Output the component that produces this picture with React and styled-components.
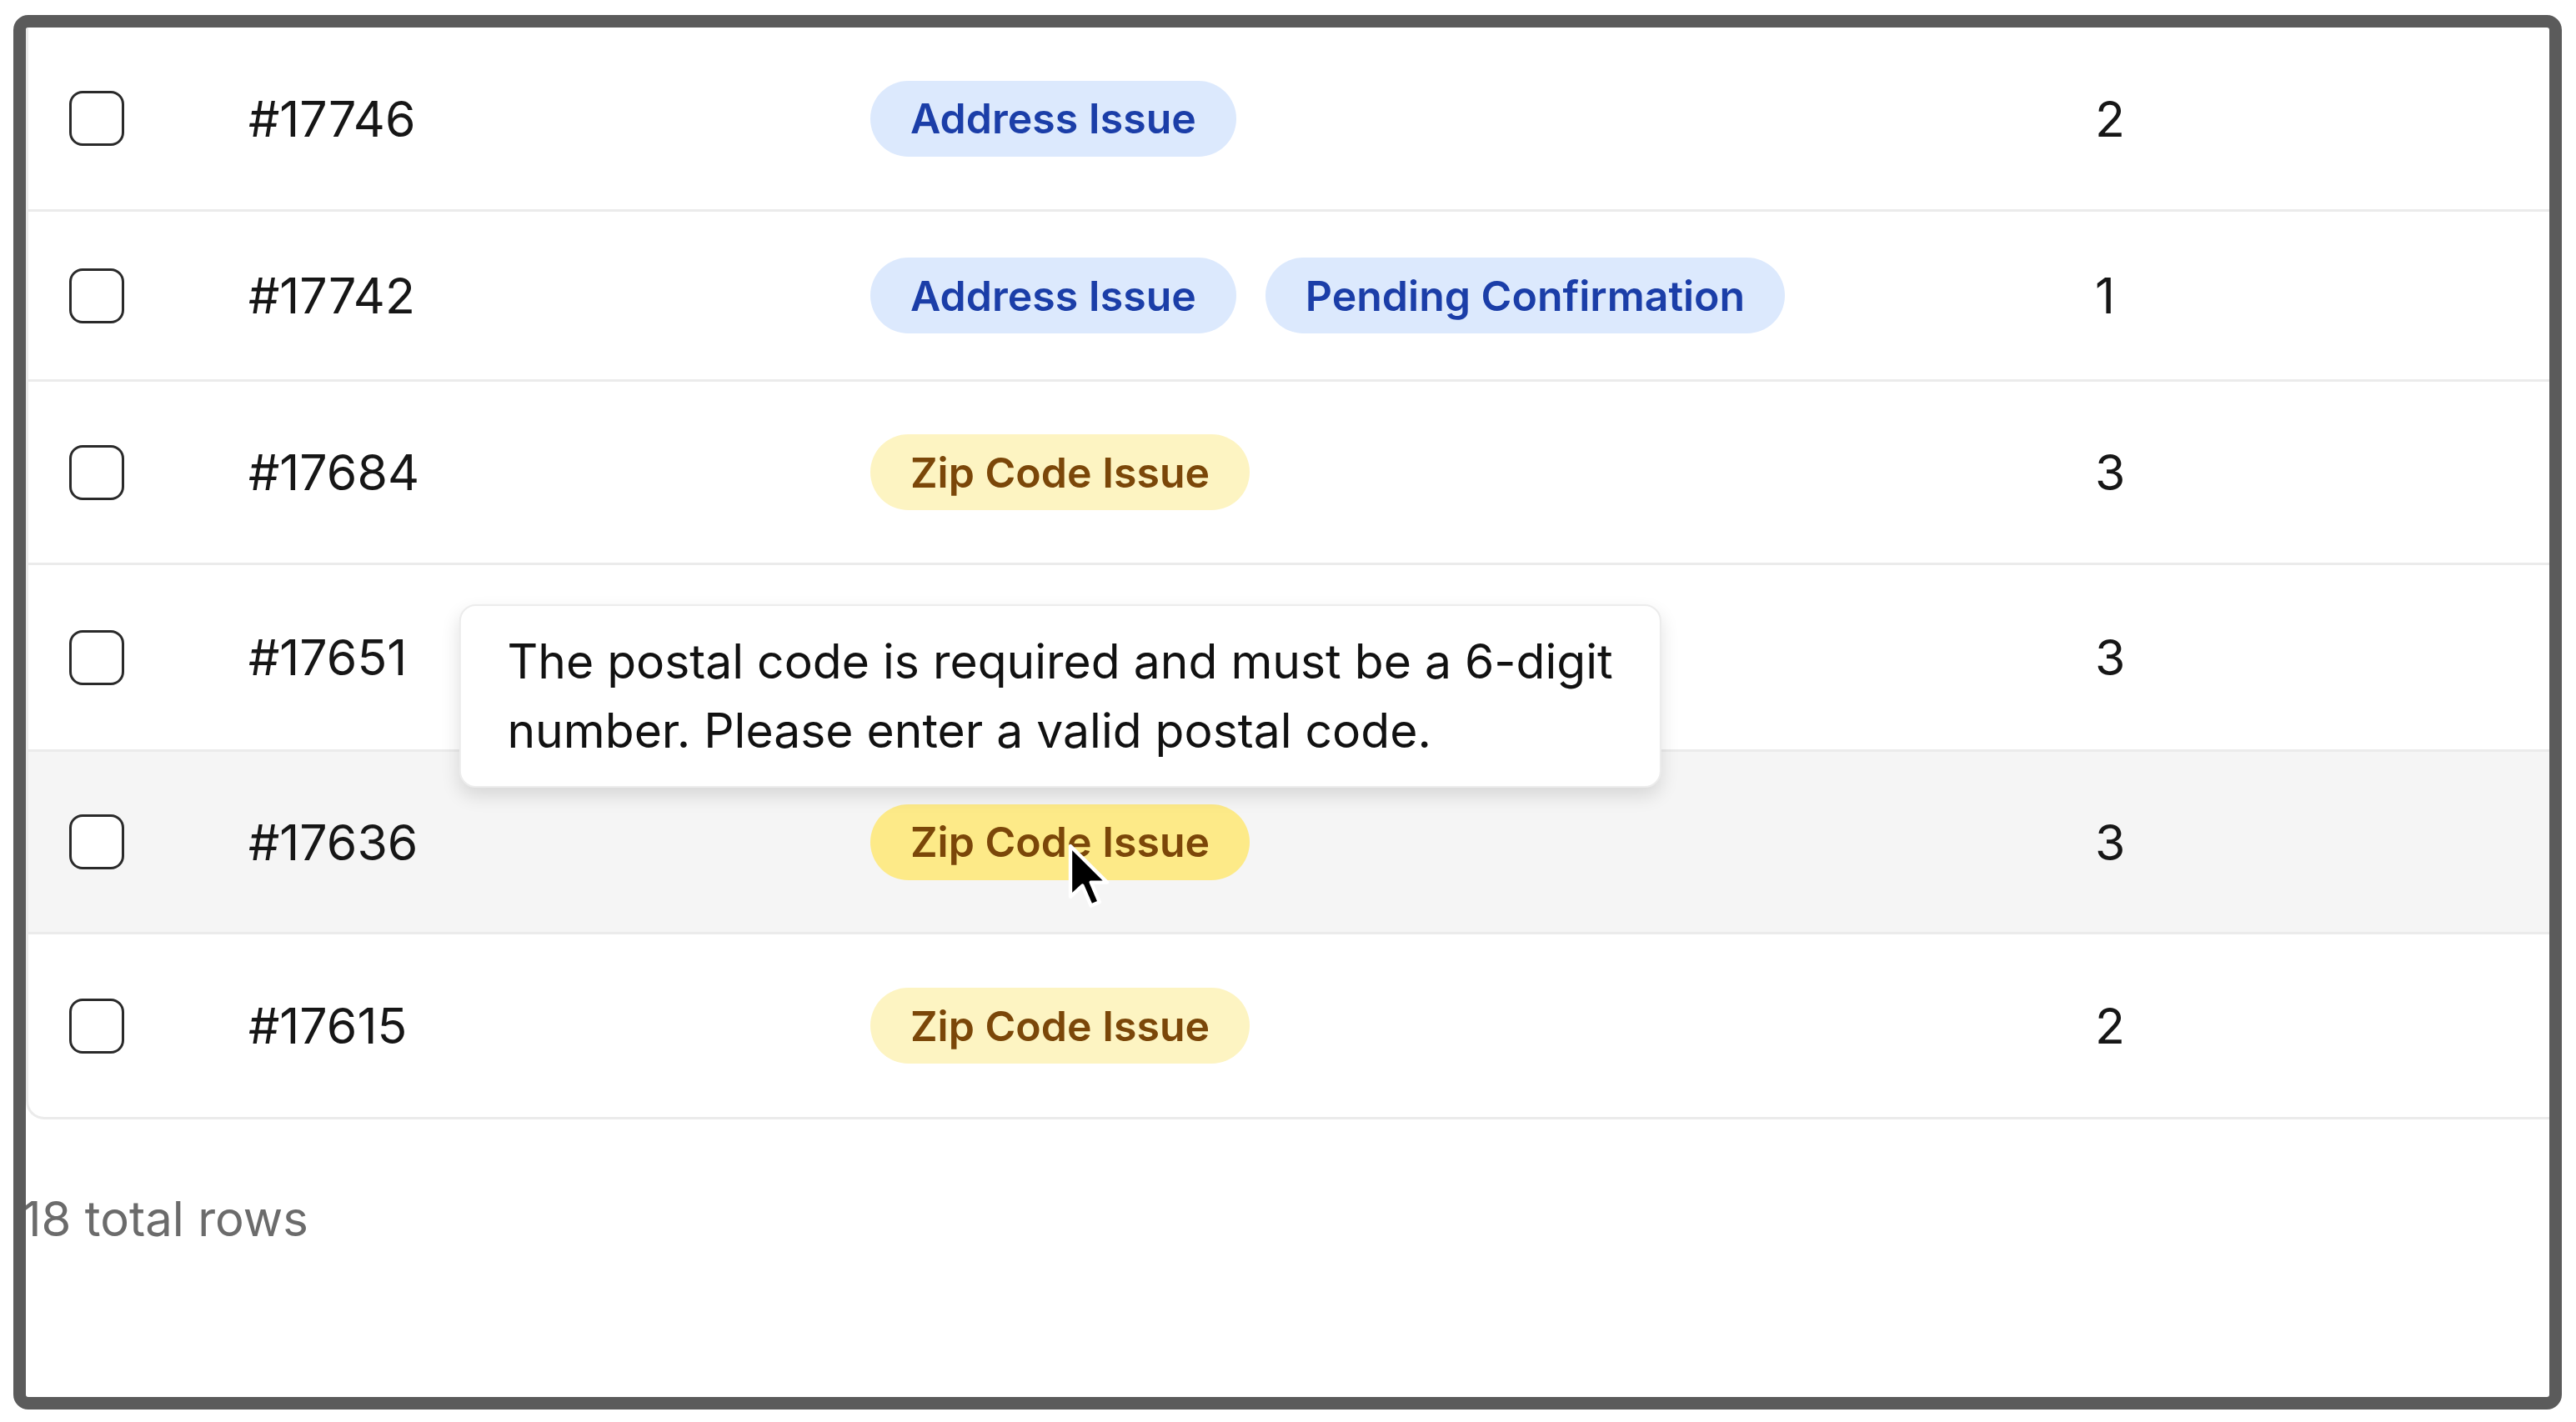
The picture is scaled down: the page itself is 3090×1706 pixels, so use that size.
import React from "react";
import styled, { createGlobalStyle } from "styled-components";

const GlobalStyle = createGlobalStyle`
  html, body {
    margin: 0;
    background: #ffffff;
  }
  body {
    padding: 18px 17px 15px 16px;
    font-family: Inter, "Noto Sans", "Liberation Sans", sans-serif;
    color: #161616;
  }
`;

const rows = [
  { id: "#17746", tags: [{ label: "Address Issue", tone: "blue" }], count: 2, h: 221 },
  {
    id: "#17742",
    tags: [
      { label: "Address Issue", tone: "blue" },
      { label: "Pending Confirmation", tone: "blue" },
    ],
    count: 1,
    h: 204,
  },
  { id: "#17684", tags: [{ label: "Zip Code Issue", tone: "yellow" }], count: 3, h: 220 },
  { id: "#17651", tags: [], count: 3, h: 224 },
  {
    id: "#17636",
    tags: [{ label: "Zip Code Issue", tone: "yellow", hover: true }],
    count: 3,
    h: 219,
    hover: true,
  },
  { id: "#17615", tags: [{ label: "Zip Code Issue", tone: "yellow" }], count: 2, h: 219 },
];

const tones = {
  blue: { bg: "#dce9fd", fg: "#1b3ea8", hover: "#c9dcfb" },
  yellow: { bg: "#fdf4c2", fg: "#7b4709", hover: "#fdea88" },
};

export default function App() {
  return (
    <>
      <GlobalStyle />
      <Frame>
        <Table>
          {rows.map((row, i) => (
            <Row key={row.id} $h={row.h} $hover={row.hover} $last={i === rows.length - 1}>
              <CheckCell>
                <Checkbox />
              </CheckCell>
              <IdCell>{row.id}</IdCell>
              <TagCell>
                {row.tags.map((tag) => (
                  <Badge key={tag.label} $tone={tag.tone} $hover={tag.hover}>
                    {tag.label}
                    {tag.hover && (
                      <>
                        <Tooltip>
                          The postal code is required and must be a 6-digit
                          <br />
                          number. Please enter a valid postal code.
                        </Tooltip>
                        <Cursor viewBox="0 0 13 20">
                          <path
                            d="M1 1 L1 16.2 L4.6 12.9 L7.2 18.9 L9.7 17.8 L7.2 11.9 L12 11.9 Z"
                            fill="#000"
                            stroke="#fff"
                            strokeWidth="1.1"
                            strokeLinejoin="round"
                          />
                        </Cursor>
                      </>
                    )}
                  </Badge>
                ))}
              </TagCell>
              <CountCell>{row.count}</CountCell>
            </Row>
          ))}
        </Table>
        <Footer>18 total rows</Footer>
      </Frame>
    </>
  );
}

const Frame = styled.div`
  position: relative;
  box-sizing: border-box;
  height: 1673px;
  border: 15px solid #5b5b5b;
  border-radius: 18px;
  background: #ffffff;
  overflow: hidden;
`;

const Table = styled.div`
  border-left: 3px solid #ebebeb;
  border-bottom: 3px solid #ebebeb;
  border-bottom-left-radius: 22px;
`;

const Row = styled.div`
  box-sizing: border-box;
  display: grid;
  grid-template-columns: 264px 746px 1469px 1fr;
  align-items: center;
  height: ${(p) => p.$h}px;
  background: ${(p) => (p.$hover ? "#f5f5f5" : "transparent")};
  border-bottom: ${(p) => (p.$last ? "none" : "3px solid #ebebeb")};
  border-bottom-left-radius: ${(p) => (p.$last ? "20px" : "0")};
`;

const CheckCell = styled.div`
  padding-left: 49px;
  display: flex;
  align-items: center;
`;

const Checkbox = styled.span`
  box-sizing: border-box;
  width: 66px;
  height: 66px;
  border: 3px solid #2a2a2a;
  border-radius: 16px;
  background: #ffffff;
`;

const IdCell = styled.div`
  font-size: 59px;
  line-height: 1;
  color: #161616;
`;

const TagCell = styled.div`
  display: flex;
  align-items: center;
  gap: 35px;
`;

const Badge = styled.span`
  position: relative;
  display: inline-flex;
  align-items: center;
  height: 91px;
  padding: 0 48px;
  border-radius: 999px;
  font-size: 50px;
  font-weight: 600;
  white-space: nowrap;
  color: ${(p) => tones[p.$tone].fg};
  background: ${(p) => (p.$hover ? tones[p.$tone].hover : tones[p.$tone].bg)};
`;

const Tooltip = styled.div`
  position: absolute;
  left: 50%;
  bottom: calc(100% + 20px);
  transform: translateX(-50%);
  box-sizing: border-box;
  padding: 25px 56px;
  border: 2px solid #ececec;
  border-radius: 20px;
  background: #ffffff;
  box-shadow: 0 10px 22px rgba(0, 0, 0, 0.12);
  font-size: 57px;
  font-weight: 400;
  line-height: 83px;
  color: #111111;
  white-space: nowrap;
  z-index: 2;
`;

const Cursor = styled.svg`
  position: absolute;
  left: 236px;
  top: 46px;
  width: 52px;
  height: 80px;
  z-index: 3;
`;

const CountCell = styled.div`
  font-size: 59px;
  line-height: 1;
  color: #161616;
`;

const Footer = styled.div`
  margin: 86px 0 0 -5px;
  font-size: 58px;
  line-height: 67px;
  color: #6b6b6b;
`;
